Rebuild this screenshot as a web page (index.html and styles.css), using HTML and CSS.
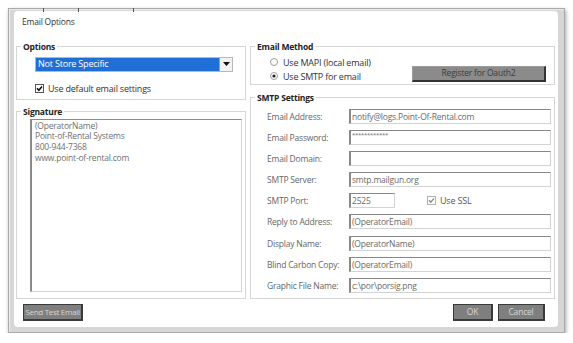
FILE: index.html
```html
<!DOCTYPE html>
<html lang="en">

<head>
    <meta charset="UTF-8">
    <title>Email Options</title>
    <link rel="stylesheet" href="styles.css">
</head>

<body>
    <div class="frame">
        <span class="tick t1"></span>
        <span class="tick t2"></span>
        <span class="tick t3"></span>
        <div class="panel">
            <div class="title">Email Options</div>
            <div class="columns">
                <div class="col">
                    <fieldset class="group options">
                        <legend>Options</legend>
                        <div class="options-body">
                            <div class="combo">
                                <span class="combo-text">Not Store Specific</span>
                                <span class="combo-btn">
                                    <svg width="7" height="4" viewBox="0 0 7 4"><path d="M0 0h7L3.5 4z" fill="#111"/></svg>
                                </span>
                            </div>
                            <div class="check">
                                <svg class="box" width="9" height="9" viewBox="0 0 9 9">
                                    <rect x="0.5" y="0.5" width="8" height="8" fill="#fff" stroke="#555"/>
                                    <path d="M2 4.3l1.8 2L7 2.4" fill="none" stroke="#111" stroke-width="1.6"/>
                                </svg>
                                Use default email settings
                            </div>
                        </div>
                    </fieldset>
                    <fieldset class="group signature">
                        <legend>Signature</legend>
                        <div class="signature-body">
                            <div class="memo">
                                (OperatorName)<br>
                                Point-of-Rental Systems<br>
                                800-944-7368<br>
                                www.point-of-rental.com
                            </div>
                        </div>
                    </fieldset>
                </div>
                <div class="col">
                    <fieldset class="group method">
                        <legend>Email Method</legend>
                        <div class="method-body">
                            <div class="radios">
                                <div class="radio">
                                    <svg width="8" height="8" viewBox="0 0 8 8"><circle cx="4" cy="4" r="3.5" fill="#fff" stroke="#9a9a9a"/></svg>
                                    Use MAPI (local email)
                                </div>
                                <div class="radio">
                                    <svg width="8" height="8" viewBox="0 0 8 8"><circle cx="4" cy="4" r="3.5" fill="#fff" stroke="#9a9a9a"/><circle cx="4" cy="4" r="1.6" fill="#222"/></svg>
                                    Use SMTP for email
                                </div>
                            </div>
                            <div class="btn oauth">Register for Oauth2</div>
                        </div>
                    </fieldset>
                    <fieldset class="group smtp">
                        <legend>SMTP Settings</legend>
                        <div class="smtp-body">
                            <div class="lbl">Email Address:</div>
                            <div class="field">notify@logs.Point-Of-Rental.com</div>
                            <div class="lbl">Email Password:</div>
                            <div class="field pass">************</div>
                            <div class="lbl">Email Domain:</div>
                            <div class="field"></div>
                            <div class="lbl">SMTP Server:</div>
                            <div class="field">smtp.mailgun.org</div>
                            <div class="lbl">SMTP Port:</div>
                            <div class="port-row">
                                <div class="field port">2525</div>
                                <div class="check ssl">
                                    <svg class="box" width="9" height="9" viewBox="0 0 9 9">
                                        <rect x="0.5" y="0.5" width="8" height="8" fill="#fff" stroke="#b0b0b0"/>
                                        <path d="M2 4.3l1.8 2L7 2.4" fill="none" stroke="#8a8a8a" stroke-width="1.4"/>
                                    </svg>
                                    Use SSL
                                </div>
                            </div>
                            <div class="lbl">Reply to Address:</div>
                            <div class="field">(OperatorEmail)</div>
                            <div class="lbl">Display Name:</div>
                            <div class="field">(OperatorName)</div>
                            <div class="lbl">Blind Carbon Copy:</div>
                            <div class="field">(OperatorEmail)</div>
                            <div class="lbl">Graphic File Name:</div>
                            <div class="field">c:\por\porsig.png</div>
                        </div>
                    </fieldset>
                </div>
            </div>
            <div class="actions">
                <div class="btn send">Send Test Email</div>
                <div class="actions-right">
                    <div class="btn ok">OK</div>
                    <div class="btn cancel">Cancel</div>
                </div>
            </div>
        </div>
    </div>
</body>

</html>
```

FILE: styles.css
```css
* {
    margin: 0;
    padding: 0;
    box-sizing: border-box;
}

body {
    background: #fff;
    font-family: 'Segoe UI', 'Open Sans', sans-serif;
    font-size: 8.5px;
    letter-spacing: -0.2px;
    color: #606060;
}

.frame {
    position: relative;
    margin: 8px 0 0 8px;
    width: 557px;
    height: 325px;
    border: 1px solid #a9a9a9;
    background: #d6d6d6;
    padding: 2px 6px 5px 5px;
    box-shadow: 1px 2px 4px rgba(0, 0, 0, 0.35), inset 1px 1px 0 #ececec;
}

.tick {
    position: absolute;
    top: -1px;
    width: 1px;
    height: 4px;
    background: #555;
}

.t1 { left: 34px; }
.t2 { left: 69px; }
.t3 { left: 124px; }

.panel {
    height: 100%;
    background: #fff;
    border-radius: 4px;
    padding: 0 3px 0 2px;
    display: flex;
    flex-direction: column;
}

.title {
    padding: 4.5px 0 0 6px;
    height: 16.5px;
    line-height: 12px;
    color: #333;
}

.columns {
    margin-top: 13px;
    display: grid;
    grid-template-columns: 230px 305px;
    column-gap: 4px;
    height: 258px;
}

.col {
    display: flex;
    flex-direction: column;
}

.group {
    border: 1px solid #d6d6d6;
    min-width: 0;
}

.group legend {
    margin-left: 4px;
    padding: 0 2px;
    font-weight: bold;
    font-size: 8.5px;
    line-height: 11px;
    color: #222;
}

.options {
    height: 59.5px;
}

.options-body {
    padding: 5.5px 12px 0 18px;
}

.combo {
    display: flex;
    height: 14.5px;
    width: 198px;
    border: 1px solid #b8b8b8;
    background: #1f6fd6;
}

.combo-text {
    flex: 1;
    color: #fff;
    line-height: 12.5px;
    padding-left: 2px;
    font-size: 9px;
}

.combo-btn {
    width: 13px;
    background: #f2f2f2;
    border-left: 1px solid #a0a0a0;
    display: flex;
    align-items: center;
    justify-content: center;
}

.check {
    display: flex;
    align-items: center;
    gap: 4px;
    height: 11px;
    color: #333;
    font-size: 9px;
}

.options .check {
    margin-top: 11.5px;
}

.signature {
    margin-top: 5.5px;
    flex: 1;
}

.signature-body {
    padding: 2.5px 3px 0 13px;
}

.memo {
    height: 173px;
    border: 1px solid #d4d4d4;
    border-left: 2px solid #8a8a8a;
    border-top-color: #8a8a8a;
    padding: 0.5px 3px;
    line-height: 10.7px;
    color: #707070;
}

.method {
    height: 44.5px;
}

.method-body {
    display: flex;
    padding: 5px 0 0 19px;
}

.radios {
    width: 142px;
    display: flex;
    flex-direction: column;
    gap: 3px;
}

.radio {
    display: flex;
    align-items: center;
    gap: 5px;
    height: 11px;
    color: #333;
    font-size: 9px;
}

.btn {
    height: 17px;
    background: #7f7f7f;
    border: 1px solid #3a3a3a;
    border-right-width: 2px;
    border-bottom-width: 2px;
    color: #d6d6d6;
    text-align: center;
    line-height: 14px;
    font-size: 8.5px;
    white-space: nowrap;
}

.oauth {
    align-self: flex-end;
    width: 134px;
    height: 15.5px;
    line-height: 12.5px;
    background: #8b8b8b;
    color: #3c3c3c;
    border-color: #9c9c9c #333 #333 #9c9c9c;
}

.smtp {
    margin-top: 6.5px;
    flex: 1;
}

.smtp-body {
    display: grid;
    grid-template-columns: 82px 1fr;
    grid-auto-rows: 15px;
    row-gap: 6.2px;
    padding: 6px 3px 0 16px;
}

.lbl {
    line-height: 15px;
    color: #666;
    white-space: nowrap;
}

.field {
    height: 15px;
    border: 1px solid #d2d2d2;
    border-left: 2px solid #888;
    border-top-color: #888;
    line-height: 13px;
    padding-left: 1px;
    color: #6a6a6a;
    white-space: nowrap;
    overflow: hidden;
}

.pass {
    font-size: 6px;
    line-height: 9px;
    letter-spacing: -0.3px;
}

.port-row {
    display: flex;
    align-items: center;
}

.port {
    width: 46px;
}

.ssl {
    margin-left: 32px;
    color: #555;
}

.actions {
    margin-top: 5.5px;
    display: flex;
    justify-content: space-between;
    padding: 0 10px 0 7px;
}

.send {
    width: 60px;
    font-size: 8px;
    letter-spacing: -0.3px;
}

.actions-right {
    display: flex;
    gap: 5px;
}

.ok {
    width: 40px;
}

.cancel {
    width: 47px;
}
```
